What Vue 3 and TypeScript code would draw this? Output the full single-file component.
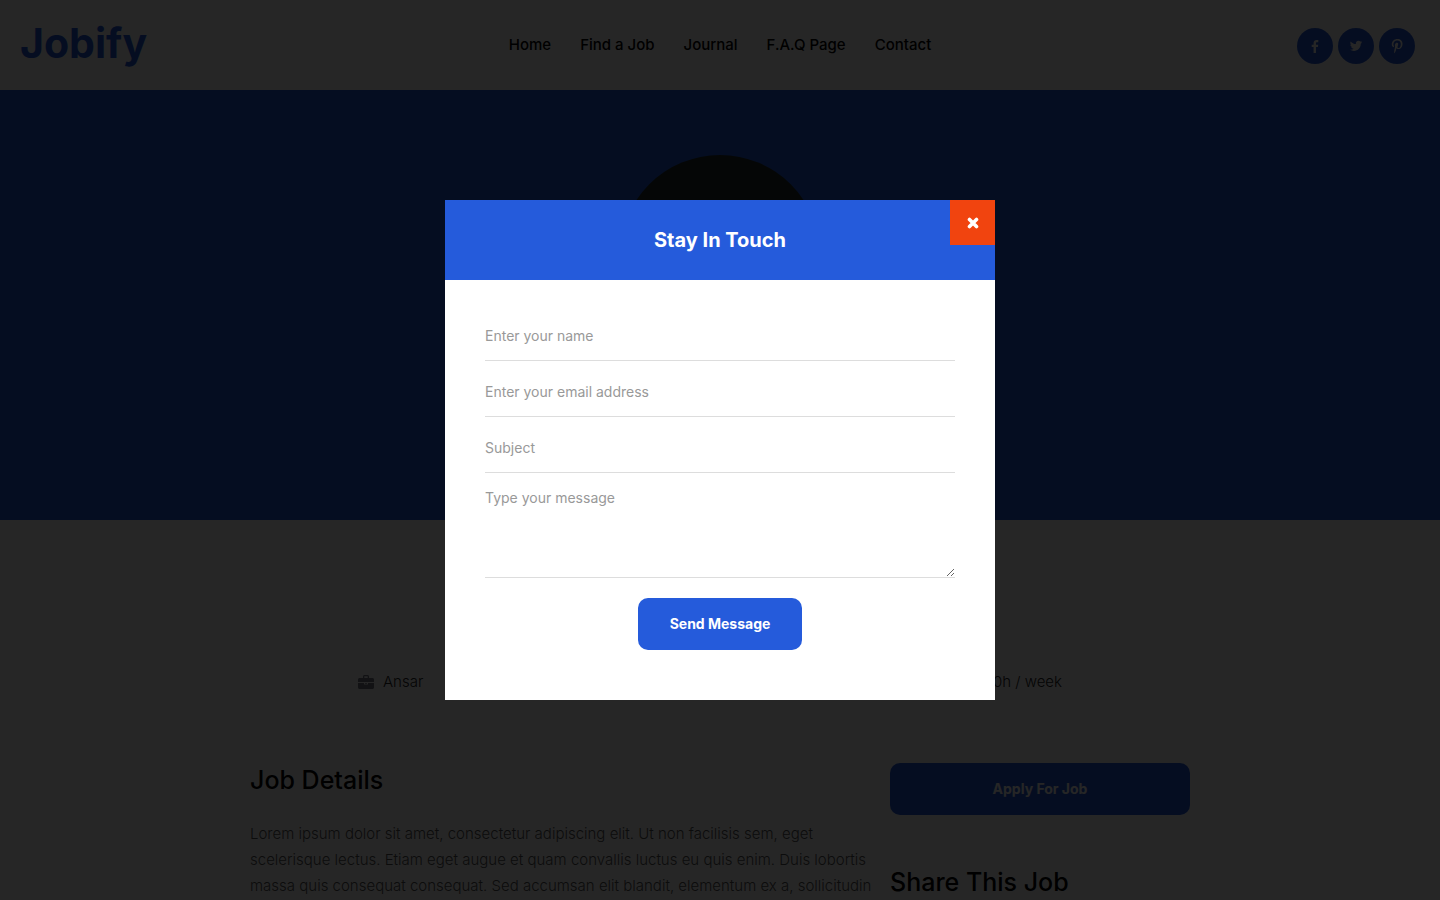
<script setup lang="ts">
import { ref } from 'vue'

interface NavLink { label: string; href: string }
interface Social { name: string; viewBox: string; path: string }

const links: NavLink[] = [
  { label: 'Home', href: '#home' },
  { label: 'Find a Job', href: '#jobs' },
  { label: 'Journal', href: '#journal' },
  { label: 'F.A.Q Page', href: '#faq' },
  { label: 'Contact', href: '#contact' },
]

const socials: Social[] = [
  { name: 'Facebook', viewBox: '-1 -1 17 17', path: 'M11 1.2v2.2H9.7c-1 0-1.2.5-1.2 1.200V6.200h2.400l-.3 2.400H8.500V15H6V8.600H4V6.200h2V4.400C6 2.300 7.300 1.100 9.200 1.100c.9 0 1.600.1 1.800.1z' },
  { name: 'Twitter', viewBox: '-2 -2 20 20', path: 'M15.500 3.600c-.5.800-1 1.200-1.600 1.700.2 5.100-3.700 8.900-8.400 8.900-1.800 0-3.500-.5-5-1.400 1.700.2 3.300-.3 4.600-1.300-1.400 0-2.600-1-3-2.200.5.100 1 .1 1.400 0C2 9 .9 7.700.9 6.100c.4.300.9.400 1.400.4C.9 5.500.5 3.700 1.300 2.300 2.900 4.200 5.200 5.500 7.900 5.600 7.400 3.500 9 1.500 11.100 1.500c.9 0 1.700.4 2.300 1 .7-.1 1.400-.4 2-.8-.2.800-.7 1.300-1.400 1.700.6 0 1.100-.1 1.500.2z' },
  { name: 'Pinterest', viewBox: '0 0 16 16', path: 'M2.800 6.300C2.800 3.200 5.300 1 8.500 1c2.800 0 5 1.900 5 4.700 0 3.100-1.700 5.400-4.100 5.400-.9 0-1.600-.4-1.900-1-.6 2.400-.8 3.600-2 5.100l-.3-.1c-.1-1.700.1-3 .9-6.300C5.600 7.300 6 4.700 8 4.800c2.300.100.6 3.300.5 4.200-.1.600.4 1 .9 1 1.900 0 2.500-2.700 2.300-4.600C11.600 3.500 10.200 2.500 8.400 2.500c-2.300 0-4 1.600-4 3.700 0 1.400.8 1.700.6 2.400-.2.900-.5.700-.9.500-.8-.5-1.300-1.500-1.300-2.800z' },
]

const fields = [
  { id: 'name', type: 'text', label: 'Enter your name' },
  { id: 'email', type: 'email', label: 'Enter your email address' },
  { id: 'subject', type: 'text', label: 'Subject' },
]

const values = ref<Record<string, string>>({ name: '', email: '', subject: '' })
const message = ref('')
const open = ref(true)
</script>

<template>
  <div class="page">
    <header class="topbar">
      <a class="logo" href="#home">Jobify</a>
      <nav class="nav">
        <a v-for="link in links" :key="link.label" :href="link.href">{{ link.label }}</a>
      </nav>
      <div class="socials">
        <a v-for="s in socials" :key="s.name" class="social" href="#" :aria-label="s.name">
          <svg :viewBox="s.viewBox" aria-hidden="true"><path :d="s.path" /></svg>
        </a>
      </div>
    </header>

    <section class="hero"><div class="avatar"></div></section>

    <div class="meta">
      <span class="meta-item">
        <svg class="briefcase" viewBox="0 0 16 16" aria-hidden="true">
          <path d="M5 4V2.500C5 1.700 5.600 1 6.500 1h3c.9 0 1.500.7 1.500 1.500V4h3.500c.8 0 1.500.7 1.500 1.500V8H0V5.500C0 4.700.7 4 1.500 4zm1.300 0h3.400V2.300H6.300zM0 9h6v1.500h4V9h6v4.500c0 .8-.7 1.500-1.500 1.500h-13C.7 15 0 14.300 0 13.500zm7 0h2v.8H7z" />
        </svg>
        Ansar
      </span>
      <span class="meta-item">40h / week</span>
    </div>

    <main class="content">
      <article class="details">
        <h2>Job Details</h2>
        <p>
          Lorem ipsum dolor sit amet, consectetur adipiscing elit. Ut non facilisis sem, eget<br />
          scelerisque lectus. Etiam eget augue et quam convallis luctus eu quis enim. Duis lobortis<br />
          massa quis consequat consequat. Sed accumsan elit blandit, elementum ex a, sollicitudin
        </p>
      </article>
      <aside class="side">
        <button class="btn apply" type="button" @click="open = true">Apply For Job</button>
        <h2>Share This Job</h2>
      </aside>
    </main>
  </div>

  <div v-if="open" class="overlay">
    <div class="modal" role="dialog" aria-modal="true" aria-labelledby="modal-title">
      <div class="modal-head">
        <h3 id="modal-title">Stay In Touch</h3>
        <button class="close" type="button" aria-label="Close" @click="open = false">
          <svg viewBox="0 0 12 12" aria-hidden="true"><path d="M2.500 2.500l7 7M9.500 2.500l-7 7" /></svg>
        </button>
      </div>
      <form class="form" @submit.prevent>
        <input
          v-for="f in fields"
          :id="f.id"
          :key="f.id"
          v-model="values[f.id]"
          :type="f.type"
          :placeholder="f.label"
          :aria-label="f.label"
        />
        <textarea v-model="message" placeholder="Type your message" aria-label="Type your message"></textarea>
        <button class="btn send" type="submit">Send Message</button>
      </form>
    </div>
  </div>
</template>

<style>
body {
  margin: 0;
  background: #fff;
}
</style>

<style scoped>
* {
  box-sizing: border-box;
}

.page,
.overlay {
  font-family: Inter, 'Open Sans', sans-serif;
}

.page {
  height: 100vh;
  overflow: hidden;
  color: #000;
  font-size: 15px;
}

a {
  color: inherit;
  text-decoration: none;
}

h2,
h3,
p {
  margin: 0;
}

.topbar {
  display: grid;
  grid-template-columns: 1fr auto 1fr;
  align-items: center;
  height: 90px;
  padding: 0 20px;
}

.logo {
  align-self: start;
  color: #255bdb;
  font-size: 41px;
  font-weight: 700;
  line-height: 86px;
}

.nav {
  display: flex;
  gap: 29px;
  padding-bottom: 2px;
  font-weight: 500;
}

.socials {
  display: flex;
  justify-content: flex-end;
  gap: 5px;
  padding: 2px 5px 0 0;
}

.social {
  display: flex;
  align-items: center;
  justify-content: center;
  width: 36px;
  height: 36px;
  border-radius: 50%;
  background: #255bdb;
}

.social svg {
  width: 16px;
  height: 16px;
  fill: #fff;
}

.hero {
  display: flex;
  justify-content: center;
  height: 430px;
  padding-top: 65px;
  background: #255bdb;
}

.avatar {
  width: 200px;
  height: 200px;
  border-radius: 50%;
  background: #222c2c;
}

.meta {
  display: flex;
  justify-content: space-between;
  max-width: 724px;
  margin: 150px auto 0;
  line-height: 24px;
}

.meta-item {
  display: flex;
  align-items: center;
  gap: 9px;
  margin-right: 20px;
  color: #222;
  font-weight: 300;
}

.briefcase {
  width: 16px;
  height: 16px;
  fill: #777c88;
}

.content {
  display: grid;
  grid-template-columns: minmax(0, 1fr) 300px;
  gap: 20px;
  max-width: 940px;
  margin: 69px auto 0;
}

h2 {
  font-size: 25px;
  font-weight: 500;
  line-height: 34px;
}

.details p {
  margin-top: 24px;
  color: #555;
  font-weight: 300;
  line-height: 26px;
  white-space: nowrap;
}

.btn {
  height: 52px;
  padding: 0 32px 2px;
  border: 0;
  border-radius: 10px;
  background: #255bdb;
  color: #fff;
  font-family: inherit;
  font-size: 14px;
  font-weight: 700;
  cursor: pointer;
}

.apply {
  width: 100%;
  margin-bottom: 50px;
}

.overlay {
  position: fixed;
  inset: 0;
  display: flex;
  align-items: center;
  justify-content: center;
  background: rgba(0, 0, 0, 0.85);
}

.modal {
  width: 550px;
  max-width: 100%;
  background: #fff;
}

.modal-head {
  position: relative;
  display: flex;
  align-items: center;
  justify-content: center;
  height: 80px;
  background: #255bdb;
  color: #fff;
}

h3 {
  font-size: 20px;
  font-weight: 700;
}

.close {
  position: absolute;
  top: 0;
  right: 0;
  display: flex;
  align-items: center;
  justify-content: center;
  width: 45px;
  height: 45px;
  padding: 0;
  border: 0;
  background: #f1440f;
  cursor: pointer;
}

.close svg {
  width: 12px;
  height: 12px;
  fill: none;
  stroke: #fff;
  stroke-width: 3.6;
  stroke-linecap: round;
}

.form {
  display: flex;
  flex-direction: column;
  gap: 5px;
  padding: 30px 40px 50px;
}

input,
textarea {
  width: 100%;
  border: 0;
  border-bottom: 1px solid #ddd;
  background: transparent;
  color: #333;
  font-family: inherit;
  font-size: 14px;
  outline: 0;
}

input {
  height: 51px;
  padding: 0;
}

textarea {
  display: block;
  height: 100px;
  padding: 10px 0;
  line-height: 20px;
  resize: vertical;
}

input::placeholder,
textarea::placeholder {
  color: #999;
  opacity: 1;
}

.send {
  align-self: center;
  margin-top: 15px;
}
</style>
